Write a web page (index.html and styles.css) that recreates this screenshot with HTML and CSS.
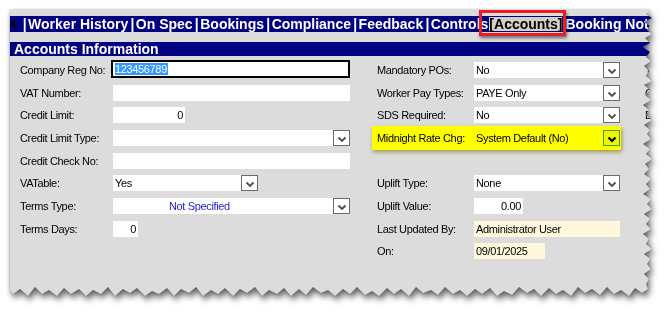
FILE: index.html
```html
<!DOCTYPE html>
<html>
<head>
<meta charset="utf-8">
<link rel="stylesheet" href="styles.css">
</head>
<body>
<div class="page">
  <div class="paper-shadow">
    <div class="paper">
      <div class="tabs">
        <span class="scroll-arrow"></span>
        <span class="sep">|</span><span class="tab">Worker History</span>
        <span class="sep">|</span><span class="tab">On Spec</span>
        <span class="sep">|</span><span class="tab">Bookings</span>
        <span class="sep">|</span><span class="tab">Compliance</span>
        <span class="sep">|</span><span class="tab">Feedback</span>
        <span class="sep">|</span><span class="tab">Controls</span>
        <span class="tab active">[Accounts]</span>
        <span class="tab">Booking Notes</span>
      </div>
      <div class="section-title">Accounts Information</div>
      <div class="form">
        <div class="col col-left">
          <div class="lbl">Company Reg No:</div>
          <div class="field focused"><span class="sel">123456789</span></div>

          <div class="lbl">VAT Number:</div>
          <div class="field"></div>

          <div class="lbl">Credit Limit:</div>
          <div class="field num w70">0</div>

          <div class="lbl">Credit Limit Type:</div>
          <div class="field select"><span class="val"></span><span class="btn"><svg width="14" height="14" viewBox="0 0 14 14"><path d="M3.5 6.5 7 10l3.5-3.5" fill="none" stroke="#505050" stroke-width="1.9"/></svg></span></div>

          <div class="lbl">Credit Check No:</div>
          <div class="field"></div>

          <div class="lbl">VATable:</div>
          <div class="field select w145"><span class="val">Yes</span><span class="btn"><svg width="14" height="14" viewBox="0 0 14 14"><path d="M3.5 6.5 7 10l3.5-3.5" fill="none" stroke="#505050" stroke-width="1.9"/></svg></span></div>

          <div class="lbl">Terms Type:</div>
          <div class="field select"><span class="val blue">Not Specified</span><span class="btn"><svg width="14" height="14" viewBox="0 0 14 14"><path d="M3.5 6.5 7 10l3.5-3.5" fill="none" stroke="#505050" stroke-width="1.9"/></svg></span></div>

          <div class="lbl">Terms Days:</div>
          <div class="field num w26">0</div>
        </div>

        <div class="col col-right">
          <div class="lbl">Mandatory POs:</div>
          <div class="field select"><span class="val">No</span><span class="btn"><svg width="14" height="14" viewBox="0 0 14 14"><path d="M3.5 6.5 7 10l3.5-3.5" fill="none" stroke="#505050" stroke-width="1.9"/></svg></span></div>

          <div class="lbl">Worker Pay Types:</div>
          <div class="field select"><span class="val">PAYE Only</span><span class="btn"><svg width="14" height="14" viewBox="0 0 14 14"><path d="M3.5 6.5 7 10l3.5-3.5" fill="none" stroke="#505050" stroke-width="1.9"/></svg></span></div>

          <div class="lbl">SDS Required:</div>
          <div class="field select"><span class="val">No</span><span class="btn"><svg width="14" height="14" viewBox="0 0 14 14"><path d="M3.5 6.5 7 10l3.5-3.5" fill="none" stroke="#505050" stroke-width="1.9"/></svg></span></div>

          <div class="highlight">
            <div class="lbl">Midnight Rate Chg:</div>
            <div class="field select hl-select"><span class="val">System Default (No)</span><span class="btn"><svg width="14" height="14" viewBox="0 0 14 14"><path d="M3.5 6.5 7 10l3.5-3.5" fill="none" stroke="#000" stroke-width="2.2"/></svg></span></div>
          </div>

          <div class="blank"></div>

          <div class="lbl">Uplift Type:</div>
          <div class="field select"><span class="val">None</span><span class="btn"><svg width="14" height="14" viewBox="0 0 14 14"><path d="M3.5 6.5 7 10l3.5-3.5" fill="none" stroke="#505050" stroke-width="1.9"/></svg></span></div>

          <div class="lbl">Uplift Value:</div>
          <div class="field num w47">0.00</div>

          <div class="lbl">Last Updated By:</div>
          <div class="field readonly">Administrator User</div>

          <div class="lbl">On:</div>
          <div class="field readonly w71">09/01/2025</div>
        </div>

        <div class="col col-extra">
          <div class="lbl">To:</div>
          <div class="lbl">Cc:</div>
          <div class="lbl">By:</div>
        </div>
      </div>
    </div>
  </div>
</div>
</body>
</html>
```

FILE: styles.css
```css
html, body {
  margin: 0;
  background: #ffffff;
}

body {
  font-family: "Liberation Sans", Arial, sans-serif;
  width: 670px;
  height: 316px;
  overflow: hidden;
}

.page {
  padding: 10px 0 0 10px;
}

.paper-shadow {
  width: 645px;
  height: 290px;
  filter: drop-shadow(0 0 1px rgba(0, 0, 0, 0.3)) drop-shadow(2px 4px 3px rgba(0, 0, 0, 0.6));
}

.paper {
  box-sizing: border-box;
  width: 100%;
  height: 100%;
  background: #dcdcdc;
  padding-top: 6px;
  clip-path: polygon(
    0 0, 641px 0,
    636px 4px, 642px 8px, 634px 12px, 640px 16px, 637px 20px, 642px 24px, 635px 28px, 640px 33px, 633px 37px,
    640px 42px, 636px 47px, 641px 51px, 634px 56px, 639px 61px, 636px 66px, 642px 71px, 634px 75px, 640px 80px,
    635px 85px, 641px 90px, 633px 95px, 639px 100px, 636px 105px, 642px 110px, 634px 115px, 640px 120px, 637px 124px,
    641px 129px, 633px 134px, 640px 139px, 636px 144px, 642px 149px, 635px 154px, 639px 159px, 634px 164px, 641px 169px,
    636px 174px, 640px 179px, 633px 184px, 641px 189px, 637px 194px, 642px 199px, 634px 204px, 640px 209px, 636px 214px,
    641px 219px, 633px 224px, 639px 229px, 636px 234px, 642px 239px, 634px 244px, 640px 249px, 637px 254px, 641px 259px,
    634px 264px, 639px 269px, 636px 274px, 638px 279px,
    632px 283px, 625px 278px, 619px 286px, 611px 280px, 604px 284px, 597px 277px, 590px 285px, 582px 279px, 575px 283px,
    568px 277px, 561px 286px, 553px 280px, 546px 284px, 539px 278px, 531px 286px, 524px 279px, 517px 283px, 509px 277px,
    502px 285px, 494px 281px, 487px 286px, 480px 278px, 472px 284px, 465px 279px, 457px 286px, 450px 280px, 443px 284px,
    435px 277px, 428px 285px, 421px 280px, 413px 283px, 406px 277px, 399px 286px, 391px 279px, 384px 284px, 377px 278px,
    369px 286px, 362px 281px, 355px 285px, 347px 277px, 340px 284px, 333px 279px, 325px 286px, 318px 280px, 311px 283px,
    303px 277px, 296px 285px, 289px 279px, 281px 286px, 274px 278px, 267px 284px, 259px 280px, 252px 286px, 245px 277px,
    237px 283px, 230px 279px, 223px 286px, 215px 278px, 208px 284px, 201px 280px, 193px 286px, 186px 277px, 179px 283px,
    171px 279px, 164px 286px, 157px 278px, 149px 284px, 142px 281px, 135px 286px, 127px 278px, 120px 283px, 113px 279px,
    105px 286px, 98px 277px, 91px 284px, 83px 280px, 76px 286px, 69px 279px, 61px 284px, 54px 278px, 47px 286px,
    39px 280px, 32px 284px, 25px 277px, 18px 286px, 10px 279px, 3px 284px, 0 280px
  );
}

/* ---------- tab strip ---------- */
.tabs {
  display: flex;
  align-items: center;
  height: 16px;
  background: #000080;
  color: #ffffff;
  font: bold 14px/16px "Liberation Sans", Arial, sans-serif;
  white-space: nowrap;
}

.tabs > span {
  flex-shrink: 0;
}

.scroll-arrow {
  width: 0;
  height: 0;
  border-top: 5px solid transparent;
  border-bottom: 5px solid transparent;
  border-right: 5px solid #000000;
  margin-right: 5.5px;
}

.sep {
  margin: 0 1.5px 0 2.2px;
}

.tab.active {
  position: relative;
  background: #d4d0c8;
  color: #000000;
  height: 14px;
  line-height: 14px;
  margin-left: 1px;
  margin-right: 3px;
}

.tab.active::after {
  content: "";
  position: absolute;
  left: -10px;
  right: -4px;
  top: -7px;
  bottom: -5px;
  border: 3px solid #ec1c24;
  box-shadow: 1px 2px 3px rgba(0, 0, 0, 0.5);
}

/* ---------- section title ---------- */
.section-title {
  margin-top: 10px;
  height: 14px;
  background: #000080;
  color: #ffffff;
  font: bold 14px/14px "Liberation Sans", Arial, sans-serif;
  padding-left: 4px;
  white-space: nowrap;
}

/* ---------- form ---------- */
.form {
  display: flex;
  align-items: flex-start;
  margin-top: 6px;
  padding-left: 10px;
  font: 11px/16px "Liberation Sans", Arial, sans-serif;
  letter-spacing: -0.35px;
  color: #000000;
}

.col {
  display: grid;
  grid-auto-rows: 16px;
  row-gap: 6.67px;
}

.col-left {
  grid-template-columns: 93px 237px;
  margin-right: 27px;
}

.col-right {
  grid-template-columns: 97px 146px;
  margin-right: 25px;
}

.col-extra {
  grid-template-columns: 20px;
}

.lbl {
  white-space: nowrap;
}

.field {
  background: #ffffff;
  height: 16px;
  padding-left: 2px;
  white-space: nowrap;
  overflow: hidden;
}

.field.focused {
  box-sizing: border-box;
  height: 18px;
  margin: -2px 0 0 -2px;
  border: 2px solid #000000;
  padding-left: 2px;
  line-height: 14px;
}

.sel {
  background: #3399ff;
  color: #ffffff;
  padding-right: 1px;
}

.field.num {
  text-align: right;
  padding: 0 2px 0 0;
}

.w47 { width: 47px; }
.w70 { width: 70px; }
.w71 { width: 69px; }
.w145 { width: 145px; }

.field.w26 { width: 23px; }

.field.select {
  display: flex;
  padding-left: 0;
}

.select .val {
  flex: 1;
  padding-left: 2px;
}

.select .val.blue {
  color: #1c1cd4;
  padding-left: 56px;
}

.select .btn {
  box-sizing: border-box;
  width: 17px;
  height: 16px;
  border: 1px solid #6c6c6c;
  background: #ffffff;
  display: flex;
  align-items: center;
  justify-content: center;
}

.field.readonly {
  background: #fff8dc;
}

.blank {
  grid-column: 1 / -1;
}

/* ---------- highlighted row ---------- */
.highlight {
  grid-column: 1 / -1;
  display: grid;
  grid-template-columns: 97px 146px;
  align-items: center;
  margin: -4px -1px -4px -5px;
  padding: 4px 1px 4px 5px;
  background: #ffff00;
  box-shadow: 1px 2px 4px rgba(120, 120, 0, 0.65);
}

.field.hl-select {
  background: #ffff00;
}

.hl-select .btn {
  background: #eef500;
  border-color: #3b9c3b;
}
```
